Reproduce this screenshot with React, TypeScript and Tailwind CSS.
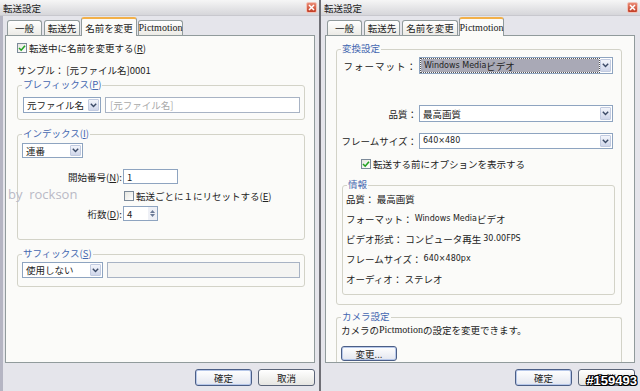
import React from "react";

const JP = "font-['Noto_Sans_CJK_JP','Noto_Sans',sans-serif]";
const SERIF = "font-['Liberation_Serif','Noto_Sans_CJK_JP',serif]";
const TAHOMA = "font-['DejaVu_Sans','Liberation_Sans',sans-serif]";

function Chevron() {
  return (
    <svg width="7" height="5" viewBox="0 0 7 5">
      <path d="M0.8 0.8 L3.5 3.6 L6.2 0.8" fill="none" stroke="#3b4a66" strokeWidth="1.4" />
    </svg>
  );
}

function DropBtn() {
  return (
    <div className="w-[11px] my-[1px] mr-[1px] flex items-center justify-center rounded-[1px] border border-[#c2cbe0] bg-linear-to-b from-[#f3f5fb] to-[#cfd6ea]">
      <Chevron />
    </div>
  );
}

function Select({
  cls,
  children,
  highlight,
}: {
  cls: string;
  children?: React.ReactNode;
  highlight?: boolean;
}) {
  return (
    <div className={`flex border border-[#8ea4c0] bg-white ${cls}`}>
      <div className="flex-1 flex items-center p-[1px]">
        {highlight ? (
          <div className="flex-1 h-full flex items-center pl-[3px] bg-[#a9a9b6] outline-1 outline-dotted outline-[#555] text-[#222]">
            {children}
          </div>
        ) : (
          <div className="flex-1 h-full flex items-center pl-[2px]">{children}</div>
        )}
      </div>
      <DropBtn />
    </div>
  );
}

function Check({ checked }: { checked?: boolean }) {
  return (
    <div className="w-[10px] h-[10px] shrink-0 border border-[#7c8a99] bg-linear-to-br from-[#e6e6e0] to-white flex items-center justify-center">
      {checked && (
        <svg width="8" height="8" viewBox="0 0 8 8">
          <path d="M1 4 L3.2 6.2 L7 1.8" fill="none" stroke="#21a121" strokeWidth="1.6" />
        </svg>
      )}
    </div>
  );
}

function Group({
  label,
  cls,
  boxCls,
  children,
}: {
  label: React.ReactNode;
  cls: string;
  boxCls: string;
  children?: React.ReactNode;
}) {
  return (
    <div className={`flex flex-col ${cls}`}>
      <div className="h-[12px] leading-[12px] pl-[5px] relative z-10 flex">
        <span className="bg-[#fbfbf9] px-[1px] text-[#4467b0]">{label}</span>
      </div>
      <div className={`-mt-[5px] border border-[#d3d3c8] rounded-[3px] ${boxCls}`}>{children}</div>
    </div>
  );
}

const TABS = [
  { t: "一般", w: "w-[35px]", serif: false },
  { t: "転送先", w: "w-[36px]", serif: false },
  { t: "名前を変更", w: "w-[56px]", serif: false },
  { t: "Pictmotion", w: "w-[45px]", serif: true },
];

function Tabs({ active }: { active: number }) {
  return (
    <div className="flex items-end h-[17px] pl-[2px] gap-[2px] relative z-10">
      {TABS.map((tab, i) =>
        i === active ? (
          <div
            key={i}
            className={`${tab.w} h-[19px] -mb-[1px] -mx-[1px] px-[1px] border border-b-0 border-[#919b9c] border-t-2 border-t-[#f2b04a] rounded-t-[3px] bg-[#fbfbf9] flex items-center justify-center ${tab.serif ? SERIF + " text-[10px]" : ""}`}
          >
            {tab.t}
          </div>
        ) : (
          <div
            key={i}
            className={`${tab.w} h-[15px] border border-b-0 border-[#919b9c] rounded-t-[3px] bg-linear-to-b from-white to-[#ecebe6] flex items-center justify-center ${tab.serif ? SERIF + " text-[10px]" : ""}`}
          >
            {tab.t}
          </div>
        )
      )}
    </div>
  );
}

function TitleBar() {
  return (
    <div className="h-[16px] flex items-center justify-between pl-[3px] pr-[2px] bg-linear-to-b from-[#f6f6f6] to-[#d6d6da] border-b border-[#c8c8ce]">
      <span className="text-[#222]">転送設定</span>
      <div className="w-[11px] h-[11px] rounded-[2px] border border-[#f3c2b8] bg-linear-to-b from-[#e98a74] to-[#c33d25] flex items-center justify-center">
        <svg width="7" height="7" viewBox="0 0 7 7">
          <path d="M1 1 L6 6 M6 1 L1 6" stroke="white" strokeWidth="1.5" />
        </svg>
      </div>
    </div>
  );
}

function Button({ children, def }: { children: React.ReactNode; def?: boolean }) {
  return (
    <div
      className={`w-[57px] h-[17px] rounded-[3px] border flex items-center justify-center text-[#222] ${
        def
          ? "border-[#4b5e86] bg-linear-to-b from-white to-[#e3e6ef] shadow-[inset_0_0_0_1px_#b7c8ea]"
          : "border-[#5a6478] bg-linear-to-b from-white to-[#e6e6e2]"
      }`}
    >
      {children}
    </div>
  );
}

function BottomButtons() {
  return (
    <div className="flex justify-end gap-[6px] mt-[6px]">
      <Button def>確定</Button>
      <Button>取消</Button>
    </div>
  );
}

function LeftDialog() {
  return (
    <div className="w-[319px] flex flex-col relative">
      <TitleBar />
      <div className="flex-1 flex flex-col bg-[#e5e5eb] border-l-[3px] border-[#b5b5c3] pl-[2px] pr-[4px] pt-[2px]">
        <Tabs active={2} />
        <div className="h-[328px] border border-[#919b9c] bg-[#fbfbf9] flex flex-col">
          <div className="mt-[6px] ml-[11px] h-[11px] flex items-center gap-[2px]">
            <Check checked />
            <span>
              転送中に名前を変更する(<span className="underline">R</span>)
            </span>
          </div>
          <div className="mt-[11px] ml-[11px] h-[11px] flex items-center">
            サンプル：&nbsp;[元ファイル名]0001
          </div>
          <Group
            label={<>プレフィックス(<span className="underline">P</span>)</>}
            cls="mt-[3px] ml-[11px] mr-[9px]"
            boxCls="pt-[11px] pb-[6px] pl-[5px] pr-[4px] flex gap-[4px]"
          >
            <Select cls="w-[78px] h-[16px]">元ファイル名</Select>
            <div className="flex-1 h-[16px] border border-[#a8b3c4] bg-white flex items-center pl-[4px] text-[#a8a8a8]">
              [元ファイル名]
            </div>
          </Group>
          <Group
            label={<>インデックス(<span className="underline">I</span>)</>}
            cls="mt-[7px] ml-[11px] mr-[9px]"
            boxCls="pt-[8px] pb-[18px] pl-[4px] flex flex-col"
          >
            <Select cls="w-[61px] h-[15px]">連番</Select>
            <div className="mt-[11px] flex items-center h-[15px]">
              <div className="w-[101px] text-right pr-[1px]">
                開始番号(<span className="underline">N</span>):
              </div>
              <div className="w-[55px] h-[15px] border border-[#8ea4c0] bg-white flex items-center pl-[3px]">1</div>
            </div>
            <div className="mt-[6px] ml-[102px] h-[11px] flex items-center gap-[2px]">
              <Check />
              <span>
                転送ごとに１にリセットする(<span className="underline">E</span>)
              </span>
            </div>
            <div className="mt-[5px] flex items-center h-[15px]">
              <div className="w-[101px] text-right pr-[1px]">
                桁数(<span className="underline">D</span>):
              </div>
              <div className="w-[35px] h-[15px] border border-[#8ea4c0] bg-white flex items-center">
                <div className="flex-1 pl-[3px]">4</div>
                <div className="w-[9px] h-full flex flex-col items-center justify-center gap-[1px] bg-[#eef0f6]">
                  <svg width="5" height="3" viewBox="0 0 5 3"><path d="M0 3 L2.5 0 L5 3Z" fill="#6b7a96" /></svg>
                  <svg width="5" height="3" viewBox="0 0 5 3"><path d="M0 0 L2.5 3 L5 0Z" fill="#6b7a96" /></svg>
                </div>
              </div>
            </div>
          </Group>
          <Group
            label={<>サフィックス(<span className="underline">S</span>)</>}
            cls="mt-[7px] ml-[11px] mr-[9px]"
            boxCls="pt-[7px] pb-[8px] pl-[4px] pr-[4px] flex gap-[4px]"
          >
            <Select cls="w-[81px] h-[16px]">使用しない</Select>
            <div className="flex-1 h-[16px] border border-[#a8b3c4] bg-[#f4f4f2]" />
          </Group>
        </div>
        <BottomButtons />
      </div>
      <div className="absolute left-[8px] top-[186px] text-[13px] leading-[16px] text-[#b9b9c6] font-['Open_Sans',sans-serif] pointer-events-none">
        by&nbsp; rockson
      </div>
    </div>
  );
}

function InfoRow({ children }: { children: React.ReactNode }) {
  return <div className="h-[12px] flex items-center">{children}</div>;
}

function RightDialog() {
  return (
    <div className="w-[319px] flex flex-col relative">
      <TitleBar />
      <div className="flex-1 flex flex-col bg-[#e5e5eb] pl-[4px] pr-[5px] pt-[2px]">
        <Tabs active={3} />
        <div className="h-[328px] border border-[#919b9c] bg-[#fbfbf9] flex flex-col overflow-hidden">
          <Group
            label="変換設定"
            cls="mt-[6px] ml-[10px] mr-[12px]"
            boxCls="pt-[7px] pb-[9px] flex flex-col"
          >
            <div className="flex items-center h-[17px]">
              <div className="w-[80px] text-right tracking-[1px]">フォーマット：</div>
              <Select cls="ml-[2px] w-[194px] h-[17px]" highlight>
                <span className={`${TAHOMA} text-[8px]`}>Windows Media</span>ビデオ
              </Select>
            </div>
            <div className="mt-[31px] flex items-center h-[17px]">
              <div className="w-[80px] text-right">品質：</div>
              <Select cls="ml-[2px] w-[194px] h-[17px]">最高画質</Select>
            </div>
            <div className="mt-[11px] flex items-center h-[16px]">
              <div className="w-[80px] text-right">フレームサイズ：</div>
              <Select cls="ml-[2px] w-[194px] h-[16px]">
                <span className={`${TAHOMA} text-[8px]`}>640×480</span>
              </Select>
            </div>
            <div className="mt-[9px] ml-[24px] h-[11px] flex items-center gap-[2px]">
              <Check checked />
              <span>転送する前にオプションを表示する</span>
            </div>
            <Group
              label="情報"
              cls="mt-[9px] ml-[5px] mr-[6px]"
              boxCls="pt-[7px] pb-[9px] pl-[3px] flex flex-col gap-[8px]"
            >
              <InfoRow>品質：&nbsp;最高画質</InfoRow>
              <InfoRow>
                フォーマット：&nbsp;<span className={`${TAHOMA} text-[8px]`}>Windows Media</span>ビデオ
              </InfoRow>
              <InfoRow>
                ビデオ形式：&nbsp;コンピュータ再生&nbsp;<span className={`${TAHOMA} text-[8px]`}>30.00FPS</span>
              </InfoRow>
              <InfoRow>
                フレームサイズ：&nbsp;<span className={`${TAHOMA} text-[8px]`}>640×480px</span>
              </InfoRow>
              <InfoRow>オーディオ：&nbsp;ステレオ</InfoRow>
            </Group>
          </Group>
          <Group
            label="カメラ設定"
            cls="mt-[5px] ml-[10px] mr-[12px] flex-1"
            boxCls="flex-1 border-b-0 rounded-b-none pt-[6px] pl-[4px] flex flex-col"
          >
            <div className="h-[12px] flex items-center">
              カメラの<span className={`${SERIF} text-[10px]`}>Pictmotion</span>の設定を変更できます。
            </div>
            <div className="mt-[10px] w-[56px] h-[15px] rounded-[3px] border border-[#4b5e86] bg-linear-to-b from-white to-[#e3e6ef] shadow-[inset_0_0_0_1px_#b7c8ea] flex items-center justify-center">
              変更...
            </div>
          </Group>
        </div>
        <BottomButtons />
      </div>
      <div className="absolute right-[3px] bottom-[3px] text-[13px] leading-[15px] font-bold text-white font-['Liberation_Sans',sans-serif] [text-shadow:1px_0_0_#000,-1px_0_0_#000,0_1px_0_#000,0_-1px_0_#000,1px_1px_0_#000,-1px_-1px_0_#000,1px_-1px_0_#000,-1px_1px_0_#000]">
        #159493
      </div>
    </div>
  );
}

export default function App() {
  return (
    <div className={`w-[640px] h-[391px] flex overflow-hidden bg-[#e5e5eb] text-[9.5px] leading-[12px] text-[#222] ${JP}`}>
      <LeftDialog />
      <div className="w-[2px] bg-[#6f6f76]" />
      <RightDialog />
    </div>
  );
}
